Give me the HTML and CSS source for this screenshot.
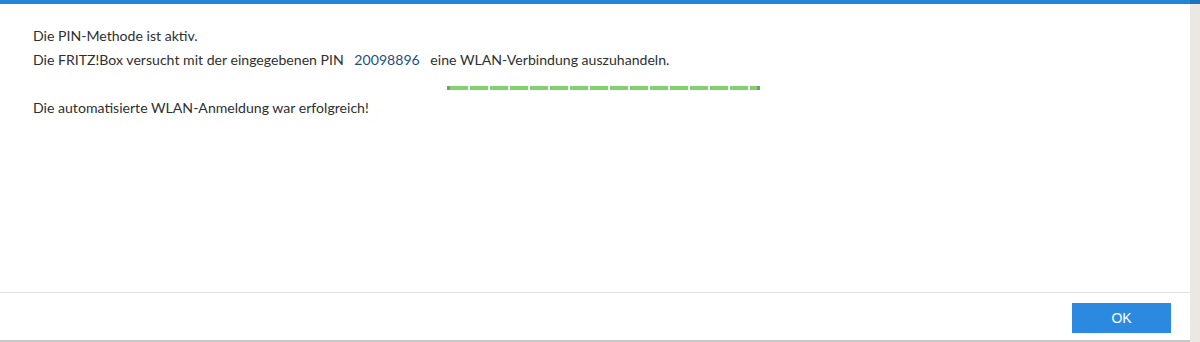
FILE: index.html
```html
<!DOCTYPE html>
<html lang="de">

<head>
    <meta charset="UTF-8">
    <title>WPS PIN</title>
    <link rel="stylesheet" href="styles.css">
</head>

<body>
    <div class="page">
        <div class="dialog">
            <div class="content">
                <p>Die PIN-Methode ist aktiv.</p>
                <p>Die FRITZ!Box versucht mit der eingegebenen PIN <span class="pin">20098896</span> eine WLAN-Verbindung auszuhandeln.</p>
                <div class="progress"></div>
                <p class="result">Die automatisierte WLAN-Anmeldung war erfolgreich!</p>
            </div>
            <div class="footer">
                <button class="ok">OK</button>
            </div>
        </div>
        <div class="side"></div>
    </div>
</body>

</html>
```

FILE: styles.css
```css
* {
    padding: 0px;
    margin: 0px;
    box-sizing: border-box;
}

body {
    font-family: Lato, "Open Sans", sans-serif;
    font-size: 14.1px;
    color: #2f2f2f;
    background: #fff;
}

.page {
    display: flex;
    height: 342px;
}

.dialog {
    flex: 1;
    display: flex;
    flex-direction: column;
    border-top: 4px solid #2186d8;
    border-bottom: 2px solid #c9c9c9;
}

.side {
    width: 10px;
    background: #ebe8e4;
    border-top: 4px solid #1c74bd;
}

.content {
    flex: 1;
    padding: 20px 33px 0;
}

.content p {
    line-height: 24px;
}

.pin {
    color: #1d4f82;
    margin: 0 7px;
}

.progress {
    margin: 14px 0 0 414px;
    width: 313px;
    height: 4px;
    background: repeating-linear-gradient(90deg, #7fd26f 0px, #7fd26f 18px, #f2faf0 18px, #f2faf0 20px);
    border-left: 3px solid #7c9a78;
    border-right: 3px solid #7c9a78;
}

.result {
    margin-top: 6px;
}

.footer {
    display: flex;
    justify-content: flex-end;
    border-top: 1px solid #e2e2e2;
    padding: 10px 19px 7px;
}

.ok {
    width: 99px;
    height: 30px;
    border: none;
    background: #2b8ae0;
    color: #fff;
    font-family: "Liberation Sans", Arial, sans-serif;
    font-size: 14px;
}
```
